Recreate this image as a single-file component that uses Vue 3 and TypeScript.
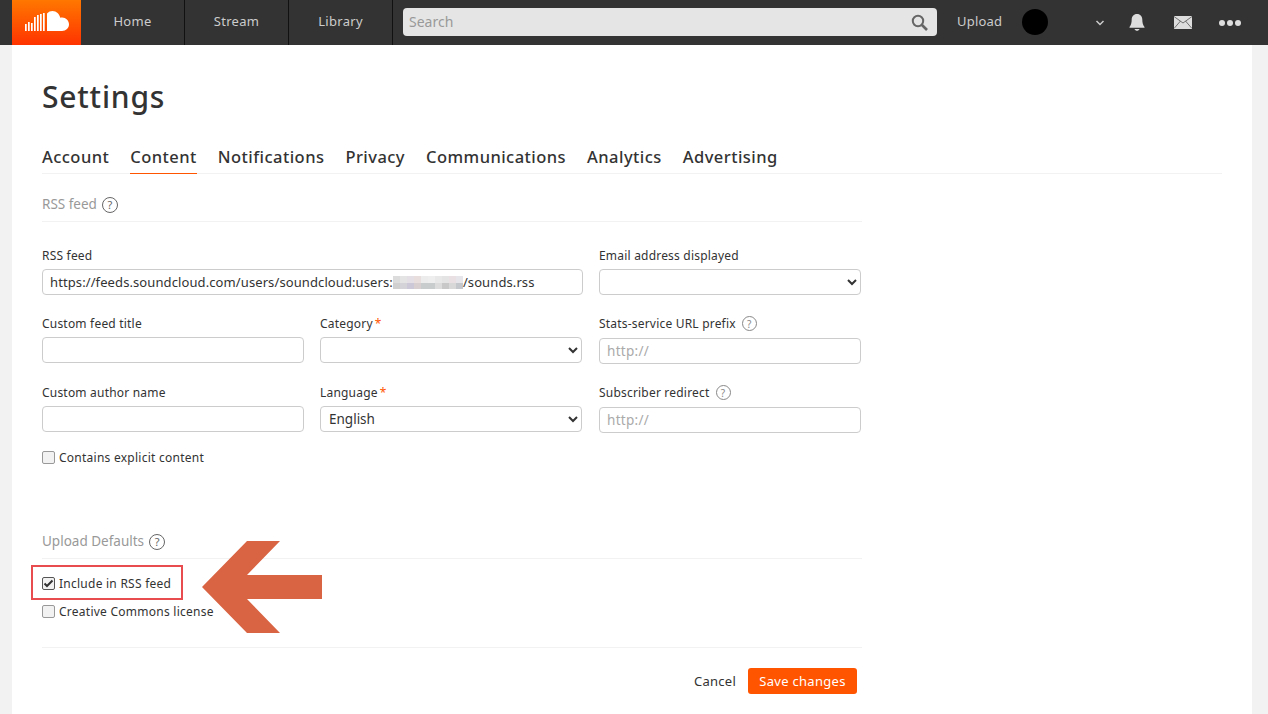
<script setup lang="ts">
const tabs = ['Account', 'Content', 'Notifications', 'Privacy', 'Communications', 'Analytics', 'Advertising']
const navItems = ['Home', 'Stream', 'Library']
const bars = [7, 9, 8, 14, 16, 17, 18]
const blurTop = ['#dcdcdc', '#e4e4e4', '#e4dfe4', '#e8dede', '#ececec', '#eeeeee', '#e8e8e8', '#e4e4e4', '#e8e0e2', '#e6e6ea']
const blurBottom = ['#d0d0d0', '#d4d4d8', '#ccc8d8', '#d8d0d0', '#c8cccc', '#c8cccc', '#dcdcdc', '#c8c8c8', '#d8d8d8', '#c4c8cc']
</script>

<template>
  <div class="page">
    <header class="topbar">
      <div class="bar-inner">
        <a class="logo" aria-label="SoundCloud">
          <svg width="44" height="20" viewBox="0 0 44 20">
            <rect v-for="(h, i) in bars" :key="i" :x="i * 3" :y="20 - h" width="1.7" :height="h" fill="#fff" />
            <path d="M22 20V2.500C23.500.8 25.500 0 27.500 0c4 0 7 3 7.800 6.800.6-.2 1.200-.3 1.900-.3 3.600 0 6.800 3 6.800 6.800S41 20 37 20z" fill="#fff" />
          </svg>
        </a>
        <nav class="nav">
          <a v-for="item in navItems" :key="item" class="nav-item">{{ item }}</a>
        </nav>
        <div class="search">
          <span class="search-text">Search</span>
          <svg width="17" height="17" viewBox="0 0 17 17" fill="none" stroke="#666" stroke-width="2">
            <circle cx="7" cy="7" r="5.200" />
            <path d="M11 11l5 5" stroke-width="2.600" />
          </svg>
        </div>
        <a class="upload">Upload</a>
        <span class="avatar"></span>
        <svg class="chevron" width="10" height="6" viewBox="0 0 10 6" fill="none" stroke="#ccc" stroke-width="1.500">
          <path d="M1.500 1l3.500 3.500L8.500 1" />
        </svg>
        <svg class="bell" width="16" height="17" viewBox="0 0 16 17" fill="#ddd">
          <path d="M8 0c3.400 0 5.300 2.500 5.300 5.500 0 3.500.7 5.500 2.200 7.500v.8H.5V13C2 11 2.700 9 2.700 5.500 2.700 2.500 4.600 0 8 0z" />
          <path d="M5.500 15h5c-.4 1.100-1.400 1.800-2.500 1.800S5.900 16.100 5.500 15z" />
        </svg>
        <svg class="mail" width="18" height="13" viewBox="0 0 18 13">
          <rect width="18" height="13" fill="#ddd" />
          <path d="M0 .5l9 6.500 9-6.500M0 12.500l6.500-7.500M18 12.500L11.500 5" fill="none" stroke="#555" stroke-width=".8" />
        </svg>
        <span class="dots"><i></i><i></i><i></i></span>
      </div>
    </header>

    <main class="sheet">
      <h1 class="title">Settings</h1>
      <ul class="tabs">
        <li v-for="tab in tabs" :key="tab" class="tab" :class="{ active: tab === 'Content' }">{{ tab }}</li>
      </ul>

      <div class="section">
        <h2 class="section-head">RSS feed <span class="help big">?</span></h2>
        <div class="form">
          <label class="field wide">
            <span class="label">RSS feed</span>
            <span class="input url">https://feeds.soundcloud.com/users/soundcloud:users:<span class="blur"><i v-for="(c, i) in blurTop" :key="'t' + i" :style="{ background: c }"></i><i v-for="(c, i) in blurBottom" :key="'b' + i" :style="{ background: c }"></i></span>/sounds.rss</span>
          </label>
          <label class="field">
            <span class="label">Email address displayed</span>
            <select class="select"><option></option></select>
          </label>

          <label class="field">
            <span class="label">Custom feed title</span>
            <input class="input" type="text" />
          </label>
          <label class="field">
            <span class="label">Category<em>*</em></span>
            <select class="select"><option></option></select>
          </label>
          <label class="field shifted">
            <span class="label">Stats-service URL prefix <span class="help">?</span></span>
            <input class="input" type="text" placeholder="http://" />
          </label>

          <label class="field">
            <span class="label">Custom author name</span>
            <input class="input" type="text" />
          </label>
          <label class="field">
            <span class="label">Language<em>*</em></span>
            <select class="select"><option>English</option></select>
          </label>
          <label class="field shifted">
            <span class="label">Subscriber redirect <span class="help">?</span></span>
            <input class="input" type="text" placeholder="http://" />
          </label>
        </div>
        <label class="check"><input type="checkbox" /><span>Contains explicit content</span></label>
      </div>

      <div class="section defaults">
        <h2 class="section-head">Upload Defaults <span class="help big">?</span></h2>
        <div class="checks">
          <label class="check"><input type="checkbox" checked /><span>Include in RSS feed</span></label>
          <label class="check"><input type="checkbox" /><span>Creative Commons license</span></label>
          <span class="highlight"></span>
          <svg class="arrow" width="120" height="92" viewBox="0 0 120 92">
            <polygon points="0,46 45,0 78,0 45,34 120,34 120,58 45,58 78,92 45,92" fill="#d96443" />
          </svg>
        </div>
      </div>

      <div class="actions">
        <a class="cancel">Cancel</a>
        <button class="save" type="button">Save changes</button>
      </div>
    </main>
  </div>
</template>

<style>
html, body { margin: 0; height: 100%; overflow: hidden; background: #f2f2f2; }
</style>

<style scoped>
.page {
  height: 714px;
  overflow: hidden;
  font-family: "Noto Sans", "DejaVu Sans", sans-serif;
  color: #333;
}
.topbar { height: 45px; background: #333; }
.bar-inner { display: flex; align-items: center; height: 45px; padding-left: 12px; }
.logo {
  width: 69px; height: 45px;
  background: linear-gradient(#f70, #f30);
  display: flex; align-items: center; justify-content: center;
}
.logo svg { margin-top: -3px; }
.nav { display: flex; height: 45px; }
.nav-item {
  width: 104px; height: 45px; box-sizing: border-box;
  border-right: 1px solid #111;
  color: #ccc; font-size: 13px; line-height: 42px; text-align: center;
  letter-spacing: .3px;
}
.search {
  margin-left: 10px; width: 534px; height: 28px; margin-bottom: 1px;
  background: #e5e5e5; border-radius: 4px; box-sizing: border-box;
  display: flex; align-items: center; justify-content: space-between;
  padding: 0 9px 0 6px;
}
.search-text { font-size: 14px; color: #999; margin-bottom: 2px; }
.upload { margin-left: 20px; color: #ccc; font-size: 13px; letter-spacing: .2px; width: 65px; margin-bottom: 3px; }
.avatar { width: 26px; height: 26px; border-radius: 50%; background: #000; margin-bottom: 1px; }
.chevron { margin-left: 47px; }
.bell { margin-left: 24px; }
.mail { margin-left: 29px; }
.dots { display: flex; gap: 2px; margin-left: 27px; }
.dots i { width: 6px; height: 6px; border-radius: 50%; background: #ddd; }

.sheet {
  margin: 0 16px 0 12px;
  height: 669px; box-sizing: border-box;
  background: #fff;
  padding: 31px 30px 0;
}
.title { margin: 0; font-size: 30px; font-weight: 500; line-height: 42px; letter-spacing: .8px; color: #333; }
.tabs {
  list-style: none; margin: 24px 0 0; padding: 0;
  display: flex; gap: 21px;
  border-bottom: 1px solid #f2f2f2;
}
.tab {
  font-size: 16.500px; line-height: 30px; height: 30px; font-weight: 500; color: #333; letter-spacing: .45px;
  margin-bottom: -1px; padding-bottom: 1px;
}
.tab.active { border-bottom: 1px solid #f50; }

.section { width: 820px; }
.section-head {
  margin: 18px 0 0; padding: 1px 0 5px; height: 23px;
  border-bottom: 1px solid #f2f2f2;
  font-size: 13.500px; font-weight: 400; color: #999; line-height: 23px;
  display: flex; align-items: center; gap: 5px;
}
.help {
  display: inline-flex; align-items: center; justify-content: center;
  width: 13px; height: 13px; border: 1px solid #888; border-radius: 50%;
  font-size: 10px; line-height: 1; color: #888; font-weight: 400; box-sizing: content-box;
  margin-left: 6px;
}
.help.big { width: 14px; height: 14px; margin-left: 0; border-color: #666; color: #666; font-size: 11px; }
.form {
  display: grid; grid-template-columns: 278px 279px 262px;
  grid-template-rows: 68px 69px 65px;
  margin-top: 25px;
  width: 820px;
}
.form .field.wide { grid-column: span 2; }
.field { display: flex; flex-direction: column; }
.label {
  font-size: 12px; line-height: 17px; height: 17px; color: #333; letter-spacing: .2px;
  display: flex; align-items: center; margin-bottom: 5px;
}
.label em { color: #f50; font-style: normal; margin-left: 2px; }
.input, .select {
  box-sizing: border-box; height: 26px; width: 262px;
  border: 1px solid #ccc; border-radius: 4px; background: #fff;
  font: 13.500px "Noto Sans", sans-serif; color: #333;
  padding: 0 7px; outline: none;
}
.input::placeholder { color: #aaa; letter-spacing: .3px; }
.select { padding: 0 4px; }
.url { width: 541px; display: flex; align-items: center; white-space: nowrap; font-size: 13px; letter-spacing: .1px; }
.blur { display: grid; grid-template-columns: repeat(10, 7px); grid-template-rows: 7px 6px; }
.blur i { display: block; }
.shifted .label { margin-bottom: 6px; }

.check { display: flex; align-items: center; gap: 4px; font-size: 12px; letter-spacing: .25px; color: #333; height: 16px; }
.check input {
  appearance: none; margin: 0; width: 13px; height: 13px;
  box-sizing: border-box; background: #f2f2f2; border: 1px solid #999; border-radius: 2px; position: relative;
}
.check input:checked {
  border-color: #555;
  background: #f2f2f2 url("data:image/svg+xml,%3Csvg xmlns='http://www.w3.org/2000/svg' viewBox='0 0 13 13'%3E%3Cpath d='M2.500 6.500l2.500 2.500 5.500-5.500' fill='none' stroke='%23333' stroke-width='2'/%3E%3C/svg%3E") center/13px no-repeat;
}

.defaults { margin-top: 64px; }
.defaults .section-head { margin-top: 0; }
.checks { position: relative; display: flex; flex-direction: column; gap: 12px; padding: 16px 0 28px; border-bottom: 1px solid #f2f2f2; }
.highlight {
  position: absolute; left: -11px; top: 6px; width: 152px; height: 35px; box-sizing: border-box;
  border: 2px solid #e84c4f;
}
.arrow { position: absolute; left: 160px; top: -18px; }

.actions { width: 815px; display: flex; justify-content: flex-end; align-items: center; gap: 12px; margin-top: 20px; }
.cancel { font-size: 13px; color: #333; letter-spacing: .25px; }
.save {
  width: 109px; height: 26px; border: 0; border-radius: 3px; background: #f50; color: #fff;
  font: 13px "Noto Sans", sans-serif; letter-spacing: .3px; padding: 0;
}
</style>
